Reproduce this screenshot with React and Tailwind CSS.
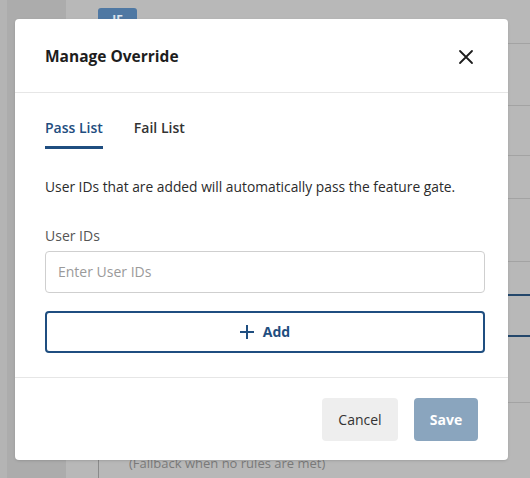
import { useState } from "react";

export default function App() {
  const [tab, setTab] = useState("pass");
  const [ids, setIds] = useState("");

  return (
    <div
      className="relative h-[478px] w-[530px] overflow-hidden bg-[#b8b8b8]"
      style={{ fontFamily: '"Open Sans", "Noto Sans", sans-serif' }}
    >
      {/* page behind the overlay */}
      <div className="flex h-full">
        <div className="w-[7px] bg-[#b4b4b4]" />
        <div className="w-[59px] bg-[#acacac]" />
        <div className="flex flex-1 flex-col">
          <div className="h-[44px] border-b border-[#a3a3a3] pl-[32px] pt-[8px]">
            <div className="flex h-[22px] w-[39px] justify-center rounded-[3px] bg-[#4f78a3] pt-[3px] text-[12px] font-bold text-white/80">
              IF
            </div>
          </div>
          <div className="h-[62px] border-b border-[#a3a3a3]" />
          <div className="h-[50px] border-b border-[#a3a3a3]" />
          <div className="h-[43px] border-b border-[#a3a3a3]" />
          <div className="h-[63px] border-b border-[#a3a3a3]" />
          <div className="h-[34px] border-b-2 border-[#24476b]" />
          <div className="h-[41px] border-b-2 border-[#24476b]" />
          <div className="h-[66px] border-b border-[#a3a3a3]" />
          <div className="ml-[32px] flex flex-1 border-l border-[#8a8a8a] pl-[30px] pt-[51px] text-[13px] text-[#7a7a7a]">
            (Fallback when no rules are met)
          </div>
        </div>
      </div>

      {/* modal */}
      <div className="absolute left-[15px] top-[19px] w-[493px] rounded-[4px] bg-white shadow-sm">
        <div className="flex h-[74px] items-center justify-between border-b border-[#e6e6e6] pl-[30px] pr-[34px] pt-[2px]">
          <h2 className="text-[15.5px] font-bold text-[#1d1d1d]">Manage Override</h2>
          <button className="text-[#1d1d1d]">
            <svg width="16" height="16" viewBox="0 0 16 16" fill="none" stroke="currentColor" strokeWidth="1.8" strokeLinecap="round">
              <path d="M2 2L14 14M14 2L2 14" />
            </svg>
          </button>
        </div>

        <div className="pl-[30px] pr-[23px] pt-[24px]">
          <div className="flex gap-[31px]">
            <button
              onClick={() => setTab("pass")}
              className={
                tab === "pass"
                  ? "border-b-[3px] border-[#1f4e80] pb-[8px] text-[14px] font-semibold text-[#1f4e80]"
                  : "border-b-[3px] border-transparent pb-[8px] text-[14px] font-semibold text-[#333]"
              }
            >
              Pass List
            </button>
            <button
              onClick={() => setTab("fail")}
              className={
                tab === "fail"
                  ? "border-b-[3px] border-[#1f4e80] pb-[8px] text-[14px] font-semibold text-[#1f4e80]"
                  : "border-b-[3px] border-transparent pb-[8px] text-[14px] font-semibold text-[#333]"
              }
            >
              Fail List
            </button>
          </div>

          <p className="mt-[28px] text-[13.8px] text-[#2b2b2b]">
            User IDs that are added will automatically {tab === "pass" ? "pass" : "fail"} the feature gate.
          </p>

          <label htmlFor="ids" className="mt-[27px] block text-[14px] text-[#555]">
            User IDs
          </label>
          <input
            id="ids"
            value={ids}
            onChange={(e) => setIds(e.target.value)}
            placeholder="Enter User IDs"
            className="mt-[5px] h-[42px] w-full rounded-[4px] border border-[#cfcfcf] px-[12px] text-[14px] text-[#333] outline-none placeholder:text-[#9a9a9a]"
          />
          <button className="mt-[18px] flex h-[42px] w-full items-center justify-center gap-[9px] rounded-[4px] border-2 border-[#1f4e80] text-[14px] font-bold text-[#1f4e80]">
            <svg width="14" height="14" viewBox="0 0 14 14" fill="none" stroke="currentColor" strokeWidth="2">
              <path d="M7 0V14M0 7H14" />
            </svg>
            Add
          </button>
        </div>

        <div className="mt-[24px] flex justify-end gap-[16px] border-t border-[#e6e6e6] px-[30px] pb-[19px] pt-[20px]">
          <button className="h-[43px] w-[76px] rounded-[4px] bg-[#eeeeee] text-[14px] font-medium text-[#333]">
            Cancel
          </button>
          <button className="h-[43px] w-[64px] rounded-[4px] bg-[#8aa5be] text-[14px] font-bold text-white">
            Save
          </button>
        </div>
      </div>
    </div>
  );
}
